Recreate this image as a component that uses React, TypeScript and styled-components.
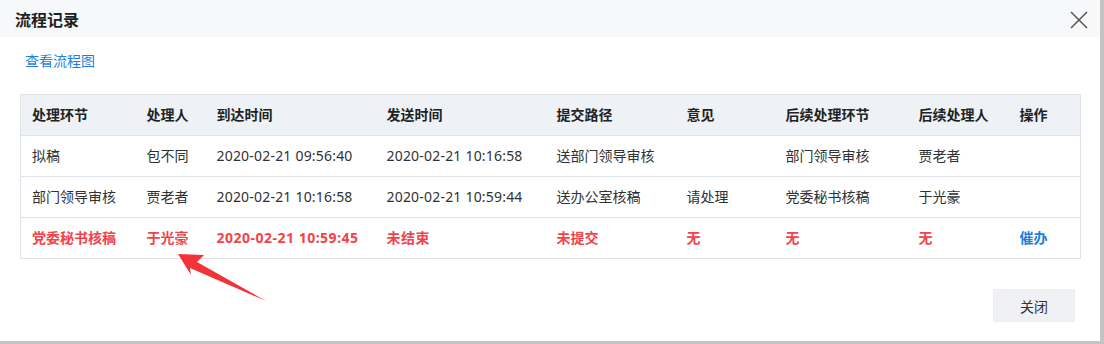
import styled, { createGlobalStyle, css } from "styled-components";

const GlobalStyle = createGlobalStyle`
  html, body {
    margin: 0;
    padding: 0;
    background: #c4c4c4;
  }
  body {
    font-family: "Noto Sans", "Noto Sans CJK SC", sans-serif;
    font-size: 14px;
    color: #303133;
  }
`;

type Row = {
  step: string;
  handler: string;
  arrived: string;
  sent: string;
  route: string;
  opinion: string;
  nextStep: string;
  nextHandler: string;
  action?: string;
  current?: boolean;
};

const columns = [
  { title: "处理环节", width: 115 },
  { title: "处理人", width: 70 },
  { title: "到达时间", width: 170 },
  { title: "发送时间", width: 170 },
  { title: "提交路径", width: 130 },
  { title: "意见", width: 99 },
  { title: "后续处理环节", width: 133 },
  { title: "后续处理人", width: 101 },
  { title: "操作", width: 72 },
];

const rows: Row[] = [
  {
    step: "拟稿",
    handler: "包不同",
    arrived: "2020-02-21 09:56:40",
    sent: "2020-02-21 10:16:58",
    route: "送部门领导审核",
    opinion: "",
    nextStep: "部门领导审核",
    nextHandler: "贾老者",
  },
  {
    step: "部门领导审核",
    handler: "贾老者",
    arrived: "2020-02-21 10:16:58",
    sent: "2020-02-21 10:59:44",
    route: "送办公室核稿",
    opinion: "请处理",
    nextStep: "党委秘书核稿",
    nextHandler: "于光豪",
  },
  {
    step: "党委秘书核稿",
    handler: "于光豪",
    arrived: "2020-02-21 10:59:45",
    sent: "未结束",
    route: "未提交",
    opinion: "无",
    nextStep: "无",
    nextHandler: "无",
    action: "催办",
    current: true,
  },
];

export default function App() {
  return (
    <>
      <GlobalStyle />
      <Dialog>
        <Header>
          <Title>流程记录</Title>
          <CloseButton aria-label="关闭">
            <svg width="18" height="18" viewBox="0 0 18 18">
              <path d="M1 1 L17 17 M17 1 L1 17" stroke="#5a5a5a" strokeWidth="1.6" fill="none" />
            </svg>
          </CloseButton>
        </Header>
        <Body>
          <FlowLink href="#">查看流程图</FlowLink>
          <TableWrap>
            <Table>
              <colgroup>
                {columns.map((c) => (
                  <col key={c.title} style={{ width: c.width }} />
                ))}
              </colgroup>
              <thead>
                <tr>
                  {columns.map((c) => (
                    <Th key={c.title}>{c.title}</Th>
                  ))}
                </tr>
              </thead>
              <tbody>
                {rows.map((r) => (
                  <tr key={r.step}>
                    <Td $current={r.current}>{r.step}</Td>
                    <Td $current={r.current}>{r.handler}</Td>
                    <Td $current={r.current} $time>{r.arrived}</Td>
                    <Td $current={r.current} $time>{r.sent}</Td>
                    <Td $current={r.current}>{r.route}</Td>
                    <Td $current={r.current}>{r.opinion}</Td>
                    <Td $current={r.current}>{r.nextStep}</Td>
                    <Td $current={r.current}>{r.nextHandler}</Td>
                    <Td>{r.action && <Urge href="#">{r.action}</Urge>}</Td>
                  </tr>
                ))}
              </tbody>
            </Table>
            <Pointer width="100" height="60" viewBox="0 0 100 60">
              <polygon points="0,0 26,1 19,8 88,47 12,14 13,21" fill="#f2343a" />
            </Pointer>
          </TableWrap>
        </Body>
        <Footer>
          <Button>关闭</Button>
        </Footer>
      </Dialog>
    </>
  );
}

const Dialog = styled.div`
  width: 1100px;
  height: 341px;
  background: #fff;
  display: flex;
  flex-direction: column;
`;

const Header = styled.div`
  height: 37px;
  padding: 2px 12px 0 15px;
  box-sizing: border-box;
  background: #f7f8fa;
  display: flex;
  align-items: center;
  justify-content: space-between;
`;

const Title = styled.h2`
  margin: 0;
  font-size: 16px;
  font-weight: 700;
  color: #1f1f1f;
  line-height: 20px;
`;

const CloseButton = styled.button`
  border: none;
  background: transparent;
  padding: 0;
  width: 18px;
  height: 18px;
  display: flex;
  cursor: pointer;
`;

const Body = styled.div`
  padding: 14px 20px 0;
  display: flex;
  flex-direction: column;
  align-items: flex-start;
`;

const FlowLink = styled.a`
  margin-left: 5px;
  font-size: 14px;
  line-height: 20px;
  color: #1f7fe0;
  text-decoration: none;
`;

const TableWrap = styled.div`
  position: relative;
  margin-top: 23px;
`;

const Table = styled.table`
  width: 1060px;
  table-layout: fixed;
  border-collapse: collapse;
  border: 1px solid #dfe2e8;
`;

const cell = css`
  height: 40px;
  padding: 0 0 0 11px;
  text-align: left;
  white-space: nowrap;
  font-size: 14px;
  line-height: 20px;
  border-bottom: 1px solid #dfe2e8;
`;

const Th = styled.th`
  ${cell}
  background: #eef2f7;
  font-weight: 700;
  color: #222;
`;

const Td = styled.td<{ $current?: boolean; $time?: boolean }>`
  ${cell}
  color: ${(p) => (p.$current ? "#f2434a" : "#303133")};
  font-weight: ${(p) => (p.$current ? 700 : 400)};
  letter-spacing: ${(p) => (p.$time ? (p.$current ? "0.5px" : "0.2px") : "0")};
`;

const Urge = styled.a`
  color: #1f7fe0;
  font-weight: 700;
  text-decoration: none;
`;

const Pointer = styled.svg`
  position: absolute;
  left: 158px;
  top: 160px;
`;

const Footer = styled.div`
  margin-top: auto;
  padding: 0 25px 19px 0;
  display: flex;
  justify-content: flex-end;
`;

const Button = styled.button`
  width: 82px;
  height: 33px;
  border: 1px solid #eceef1;
  border-radius: 2px;
  background: #eff1f4;
  font-family: "Noto Sans", "Noto Sans CJK SC", sans-serif;
  font-size: 14px;
  color: #333;
  cursor: pointer;
`;
